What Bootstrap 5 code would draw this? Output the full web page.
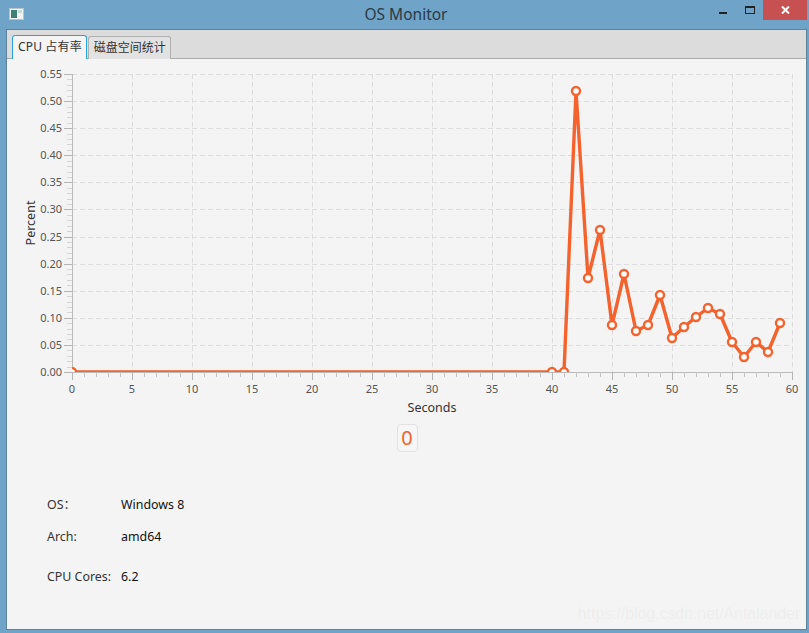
<!DOCTYPE html>
<html lang="en">
<head>
    <meta charset="UTF-8">
    <meta name="viewport" content="width=device-width, initial-scale=1.0">
    <title>OS Monitor</title>
    <link href="https://cdn.jsdelivr.net/npm/bootstrap@5.3.0/dist/css/bootstrap.min.css" rel="stylesheet">
    <style>
        html, body {
            height: 100%;
        }
        body {
            background-color: #6fa3c7;
            font-family: "Noto Sans", "Noto Sans CJK SC", sans-serif;
            overflow: hidden;
        }
        .title-bar {
            height: 29px;
            padding-left: 9px;
        }
        .title-text {
            font-size: 15.5px;
            line-height: 28px;
            color: #2b3a45;
            margin-left: 326px;
            width: 112px;
            text-align: center;
        }
        .win-controls {
            margin-left: auto;
            margin-right: 2px;
            height: 20px;
        }
        .win-min {
            width: 8px;
            height: 2px;
            background: #222;
            margin: 12px 0 0 0;
        }
        .win-max {
            width: 10px;
            height: 8px;
            border: 1px solid #222;
            border-top-width: 2px;
            margin: 6px 8px 0 18px;
        }
        .win-close {
            width: 44px;
            height: 20px;
            background: #c75050;
        }
        .window-body {
            position: relative;
            height: 601px;
            margin: 0 2px 0 6px;
            background: #f4f4f4;
            border: 1px solid #5d8299;
        }
        .tab-strip {
            background: #dcdcdc;
            border-bottom: 1px solid #aaa;
            height: 29px;
            padding: 5px 0 0 5px;
            gap: 1px;
        }
        .tab-strip .nav-link {
            font-size: 12px;
            line-height: 16px;
            padding: 3px 4px 3px 5px;
            color: #333;
            border: 1px solid #b0b0b0;
            border-bottom: 0;
            border-radius: 3px 3px 0 0;
            background: #e2e2e2;
            height: 23px;
            margin-top: 1px;
        }
        .tab-strip .nav-link.active {
            background: #f4f4f4;
            border: 1px solid #2ba3d4;
            border-bottom: 0;
            height: 24px;
            margin-top: 0;
            color: #333;
            letter-spacing: 0.15px;
        }
        .chart-box {
            display: block;
        }
        .chart-box text {
            font-family: "Noto Sans", sans-serif;
            font-size: 11px;
            fill: #555;
        }
        .chart-box text.axis-title {
            font-size: 12.5px;
            fill: #333;
        }
        .count-wrap {
            margin-top: 1px;
            padding-left: 1px;
        }
        .count-chip {
            width: 21px;
            height: 28px;
            border: 1px solid #e2e2e2;
            border-radius: 4px;
            font-size: 20px;
            line-height: 25px;
            text-align: center;
            color: #f4622d;
            background: #f6f6f6;
        }
        .info-block {
            padding-left: 40px;
            font-size: 12.4px;
            color: #333;
        }
        .info-row {
            --bs-gutter-x: 0;
            width: 300px;
            line-height: 16px;
        }
        .os-row { margin-top: 45px; }
        .arch-row { margin-top: 16px; }
        .cores-row { margin-top: 24px; }
        .info-label {
            width: 74px;
        }
        .info-value {
            color: #111;
        }
        .watermark {
            position: absolute;
            right: 6px;
            bottom: 3px;
            font-family: "Liberation Sans", sans-serif;
            font-size: 15.8px;
            color: #ededed;
            text-shadow: 0 0 1px #fafafa;
        }
    </style>
</head>
<body>

    <!-- Title bar -->
    <div class="title-bar d-flex align-items-start">
        <svg class="mt-2" width="15" height="12" viewBox="0 0 15 12">
            <rect x="0.5" y="0.5" width="14" height="11" fill="#f2f2f2" stroke="#b9c4cc"/>
            <rect x="2" y="2" width="6" height="8" fill="#3f7f77"/>
            <rect x="9" y="2" width="4" height="3" fill="#c4ddd6"/>
        </svg>
        <div class="title-text">OS Monitor</div>
        <div class="win-controls d-flex align-items-start">
            <div class="win-min"></div>
            <div class="win-max"></div>
            <div class="win-close d-flex align-items-center justify-content-center">
                <svg width="9" height="8" viewBox="0 0 9 8">
                    <path d="M1 0.5 L8 7.5 M8 0.5 L1 7.5" stroke="#fff" stroke-width="2" fill="none"/>
                </svg>
            </div>
        </div>
    </div>

    <div class="window-body">
        <!-- Tabs -->
        <ul class="nav tab-strip flex-nowrap">
            <li class="nav-item"><a class="nav-link active" href="#">CPU 占有率</a></li>
            <li class="nav-item"><a class="nav-link" href="#">磁盘空间统计</a></li>
        </ul>

        <!-- Chart, drawn in window coordinates -->
        <svg class="chart-box" id="cpuChart" width="800" height="364" viewBox="7 59 800 364"></svg>

        <div class="d-flex justify-content-center count-wrap">
            <div class="count-chip">0</div>
        </div>

        <div class="info-block">
            <div class="row info-row os-row"><div class="col-auto info-label">OS：</div><div class="col-auto info-value">Windows 8</div></div>
            <div class="row info-row arch-row"><div class="col-auto info-label">Arch:</div><div class="col-auto info-value">amd64</div></div>
            <div class="row info-row cores-row"><div class="col-auto info-label">CPU Cores:</div><div class="col-auto info-value">6.2</div></div>
        </div>

        <div class="watermark">https://blog.csdn.net/Antalander</div>
    </div>

    <script>
        const left = 72, right = 792, top0 = 74, bottom = 372;
        const stepX = 12, stepY = (bottom - top0) / 11;

        // pixel height of each sample from 40s on, everything before sits on zero
        const ys = [372, 372, 91, 278, 230, 325, 274, 331, 325, 295, 338, 327, 317, 308, 314, 342, 357, 342, 352, 323];
        const points = [];
        for (let i = 0; i < 40; i++) points.push([left + i * stepX, 372]);
        ys.forEach((y, i) => points.push([left + (40 + i) * stepX, y]));

        let s = "";
        s += `<defs><clipPath id="plotClip"><rect x="${left}" y="${top0}" width="${right - left}" height="${bottom - top0}"/></clipPath></defs>`;

        // grid
        for (let i = 0; i <= 12; i++) {
            const x = left + i * 5 * stepX + 0.5;
            if (i > 0) s += `<line x1="${x}" y1="${top0}" x2="${x}" y2="${bottom}" stroke="#dedede" stroke-dasharray="5 3"/>`;
        }
        for (let i = 1; i <= 11; i++) {
            const y = Math.round(bottom - i * stepY) + 0.5;
            s += `<line x1="${left}" y1="${y}" x2="${right}" y2="${y}" stroke="#dedede" stroke-dasharray="5 3"/>`;
        }

        // y axis
        s += `<line x1="${left + 0.5}" y1="${top0}" x2="${left + 0.5}" y2="${bottom}" stroke="#bbb"/>`;
        for (let i = 0; i <= 55; i++) {
            const y = Math.round(bottom - i * stepY / 5) + 0.5;
            const major = i % 5 === 0;
            s += `<line x1="${major ? 64 : 67}" y1="${y}" x2="${left}" y2="${y}" stroke="${major ? '#b4b4b4' : '#d4d4d4'}"/>`;
            if (major) s += `<text x="62" y="${y + 3.5}" text-anchor="end">${(i / 100).toFixed(2)}</text>`;
        }

        // x axis
        s += `<line x1="${left}" y1="${bottom + 0.5}" x2="${right}" y2="${bottom + 0.5}" stroke="#bbb"/>`;
        for (let i = 0; i <= 60; i++) {
            const x = left + i * stepX + 0.5;
            const major = i % 5 === 0;
            s += `<line x1="${x}" y1="${bottom}" x2="${x}" y2="${bottom + (major ? 8 : 5)}" stroke="${major ? '#b4b4b4' : '#c4c4c4'}"/>`;
            if (major) s += `<text x="${x - 0.5}" y="393" text-anchor="middle">${i}</text>`;
        }

        s += `<text class="axis-title" x="432" y="412" text-anchor="middle">Seconds</text>`;
        s += `<text class="axis-title" transform="translate(35 223) rotate(-90)" text-anchor="middle">Percent</text>`;

        // series
        s += `<g clip-path="url(#plotClip)">`;
        s += `<polyline points="${points.map(p => p.join(",")).join(" ")}" fill="none" stroke="#f4622d" stroke-width="3.4" stroke-linejoin="round"/>`;
        [points[0]].concat(points.slice(40)).forEach(p => {
            s += `<circle cx="${p[0]}" cy="${p[1]}" r="4" fill="#fff" stroke="#f4622d" stroke-width="2.4"/>`;
        });
        s += `</g>`;

        document.getElementById("cpuChart").innerHTML = s;
    </script>

    <script src="https://cdn.jsdelivr.net/npm/bootstrap@5.3.0/dist/js/bootstrap.bundle.min.js"></script>
</body>
</html>
